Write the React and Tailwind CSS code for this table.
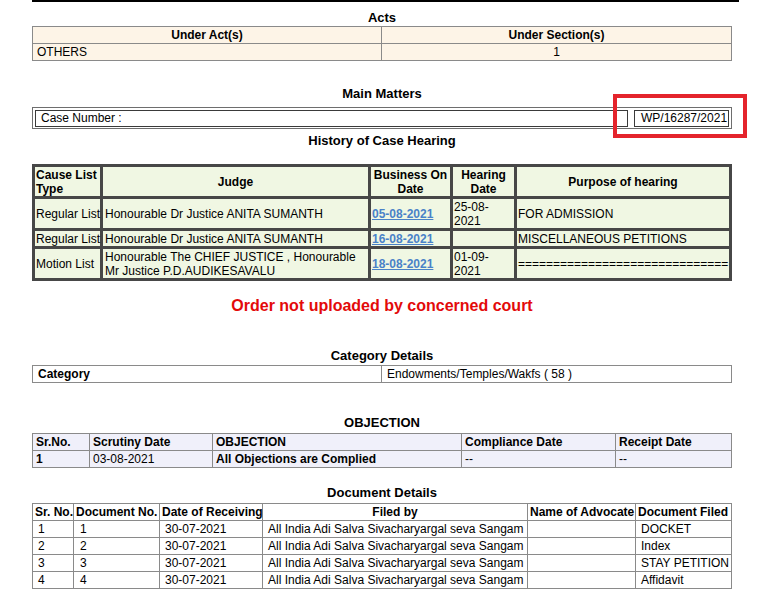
const caseActs = [{ act: 'OTHERS', section: '1' }]

const hearings = [
  {
    type: 'Regular List',
    judge: ['Honourable Dr Justice ANITA SUMANTH'],
    business: '05-08-2021',
    hearing: ['25-08-', '2021'],
    purpose: 'FOR ADMISSION',
    tall: true,
  },
  {
    type: 'Regular List',
    judge: ['Honourable Dr Justice ANITA SUMANTH'],
    business: '16-08-2021',
    hearing: [],
    purpose: 'MISCELLANEOUS PETITIONS',
    tall: false,
  },
  {
    type: 'Motion List',
    judge: ['Honourable The CHIEF JUSTICE , Honourable', 'Mr Justice P.D.AUDIKESAVALU'],
    business: '18-08-2021',
    hearing: ['01-09-', '2021'],
    purpose: '==============================',
    tall: true,
  },
]

const documents = [
  { no: '1', doc: '1', filed: 'DOCKET' },
  { no: '2', doc: '2', filed: 'Index' },
  { no: '3', doc: '3', filed: 'STAY PETITION' },
  { no: '4', doc: '4', filed: 'Affidavit' },
]

function Title({ children, className = '' }) {
  return <div className={`text-center text-[13px] leading-[15px] font-bold ${className}`}>{children}</div>
}

// thin grey grid cell used by the plain tables
const cell = 'border border-[#8a8a8a] py-px align-middle'
// dark double-line cell of the hearing history table
const hcell = 'border border-[#474747] bg-[#f0f7e3] px-px align-middle'

export default function App() {
  return (
    <div className="relative min-h-[601px] bg-white font-['Liberation_Sans',Arial,sans-serif] text-[12px] leading-[14px] text-black">
      <div className="ml-[32px] h-[2px] w-[707px] bg-black" />

      <div className="ml-[32px] w-[700px]">
        {/* Acts */}
        <Title className="mt-[8px]">Acts</Title>
        <table className="mt-px w-[700px] table-fixed border-collapse bg-[#fdf4e7]">
          <thead>
            <tr>
              <th className={`${cell} w-[349px] px-[4px] text-center`}>Under Act(s)</th>
              <th className={`${cell} px-[4px] text-center`}>Under Section(s)</th>
            </tr>
          </thead>
          <tbody>
            {caseActs.map((a) => (
              <tr key={a.act}>
                <td className={`${cell} px-[4px]`}>{a.act}</td>
                <td className={`${cell} px-[4px] text-center`}>{a.section}</td>
              </tr>
            ))}
          </tbody>
        </table>

        {/* Main matters */}
        <Title className="mt-[25px]">Main Matters</Title>
        <div className="mt-[6px] flex h-[22px] w-[700px] items-center gap-[6px] border border-[#6e6e6e] px-[2px]">
          <div className="h-[17px] w-[593px] border border-[#3a3a3a] pl-[5px] leading-[15px]">Case Number :</div>
          <div className="h-[17px] w-[95px] border border-[#3a3a3a] pl-[6px] leading-[15px]">WP/16287/2021</div>
        </div>

        {/* History */}
        <Title className="mt-[4px]">History of Case Hearing</Title>
        <table className="mt-[16px] w-[700px] table-fixed border-separate border-spacing-px border border-[#474747] bg-[#474747]">
          <thead>
            <tr>
              <th className={`${hcell} h-[31px] w-[67px] text-left`}>Cause List<br />Type</th>
              <th className={`${hcell} w-[267px] text-center`}>Judge</th>
              <th className={`${hcell} w-[81px] text-center`}>Business On<br />Date</th>
              <th className={`${hcell} w-[63px] text-center`}>Hearing<br />Date</th>
              <th className={`${hcell} text-center`}>Purpose of hearing</th>
            </tr>
          </thead>
          <tbody>
            {hearings.map((h) => (
              <tr key={h.business}>
                <td className={`${hcell} ${h.tall ? 'h-[31px]' : 'h-[17px]'} whitespace-nowrap`}>{h.type}</td>
                <td className={`${hcell} pl-[2px]`}>
                  {h.judge.map((line, i) => (
                    <span key={i}>{i > 0 && <br />}{line}</span>
                  ))}
                </td>
                <td className={hcell}>
                  <a href="#" className="font-bold text-[#4a82c8] underline">{h.business}</a>
                </td>
                <td className={hcell}>
                  {h.hearing.map((line, i) => (
                    <span key={i}>{i > 0 && <br />}{line}</span>
                  ))}
                </td>
                <td className={`${hcell} whitespace-nowrap`}>{h.purpose}</td>
              </tr>
            ))}
          </tbody>
        </table>

        <div className="mt-[16px] text-center text-[16px] leading-[18px] font-bold text-[#e30a0a]">
          Order not uploaded by concerned court
        </div>

        {/* Category */}
        <Title className="mt-[33px]">Category Details</Title>
        <table className="mt-[2px] w-[700px] table-fixed border-collapse">
          <tbody>
            <tr>
              <td className={`${cell} w-[349px] px-[5px] font-bold`}>Category</td>
              <td className={`${cell} px-[5px]`}>Endowments/Temples/Wakfs ( 58 )</td>
            </tr>
          </tbody>
        </table>

        {/* Objection */}
        <Title className="mt-[32px]">OBJECTION</Title>
        <table className="mt-[3px] w-[700px] table-fixed border-collapse bg-[#f0f0fa]">
          <thead>
            <tr className="text-left">
              <th className={`${cell} w-[57px] px-[3px]`}>Sr.No.</th>
              <th className={`${cell} w-[123px] px-[3px]`}>Scrutiny Date</th>
              <th className={`${cell} w-[249px] px-[3px]`}>OBJECTION</th>
              <th className={`${cell} w-[154px] px-[3px]`}>Compliance Date</th>
              <th className={`${cell} px-[3px]`}>Receipt Date</th>
            </tr>
          </thead>
          <tbody>
            <tr>
              <td className={`${cell} px-[3px] font-bold`}>1</td>
              <td className={`${cell} px-[3px]`}>03-08-2021</td>
              <td className={`${cell} px-[3px] font-bold`}>All Objections are Complied</td>
              <td className={`${cell} px-[3px]`}>--</td>
              <td className={`${cell} px-[3px]`}>--</td>
            </tr>
          </tbody>
        </table>

        {/* Documents */}
        <Title className="mt-[17px]">Document Details</Title>
        <table className="mt-[3px] w-[700px] table-fixed border-collapse">
          <thead>
            <tr className="text-left">
              <th className={`${cell} w-[41px] px-[2px] whitespace-nowrap`}>Sr. No.</th>
              <th className={`${cell} w-[86px] px-[2px] whitespace-nowrap`}>Document No.</th>
              <th className={`${cell} w-[103px] px-[2px] whitespace-nowrap`}>Date of Receiving</th>
              <th className={`${cell} w-[265px] px-[2px] text-center`}>Filed by</th>
              <th className={`${cell} w-[108px] px-[2px] whitespace-nowrap`}>Name of Advocate</th>
              <th className={`${cell} px-[2px] whitespace-nowrap`}>Document Filed</th>
            </tr>
          </thead>
          <tbody>
            {documents.map((d) => (
              <tr key={d.no}>
                <td className={`${cell} pl-[5px]`}>{d.no}</td>
                <td className={`${cell} pl-[6px]`}>{d.doc}</td>
                <td className={`${cell} pl-[5px]`}>30-07-2021</td>
                <td className={`${cell} pl-[5px] whitespace-nowrap`}>All India Adi Salva Sivacharyargal seva Sangam</td>
                <td className={cell}></td>
                <td className={`${cell} pl-[5px] whitespace-nowrap`}>{d.filed}</td>
              </tr>
            ))}
          </tbody>
        </table>
      </div>

      {/* annotation box around the case number */}
      <div className="absolute left-[613px] top-[94px] h-[44px] w-[134px] border-4 border-[#e4242c]" />
    </div>
  )
}
